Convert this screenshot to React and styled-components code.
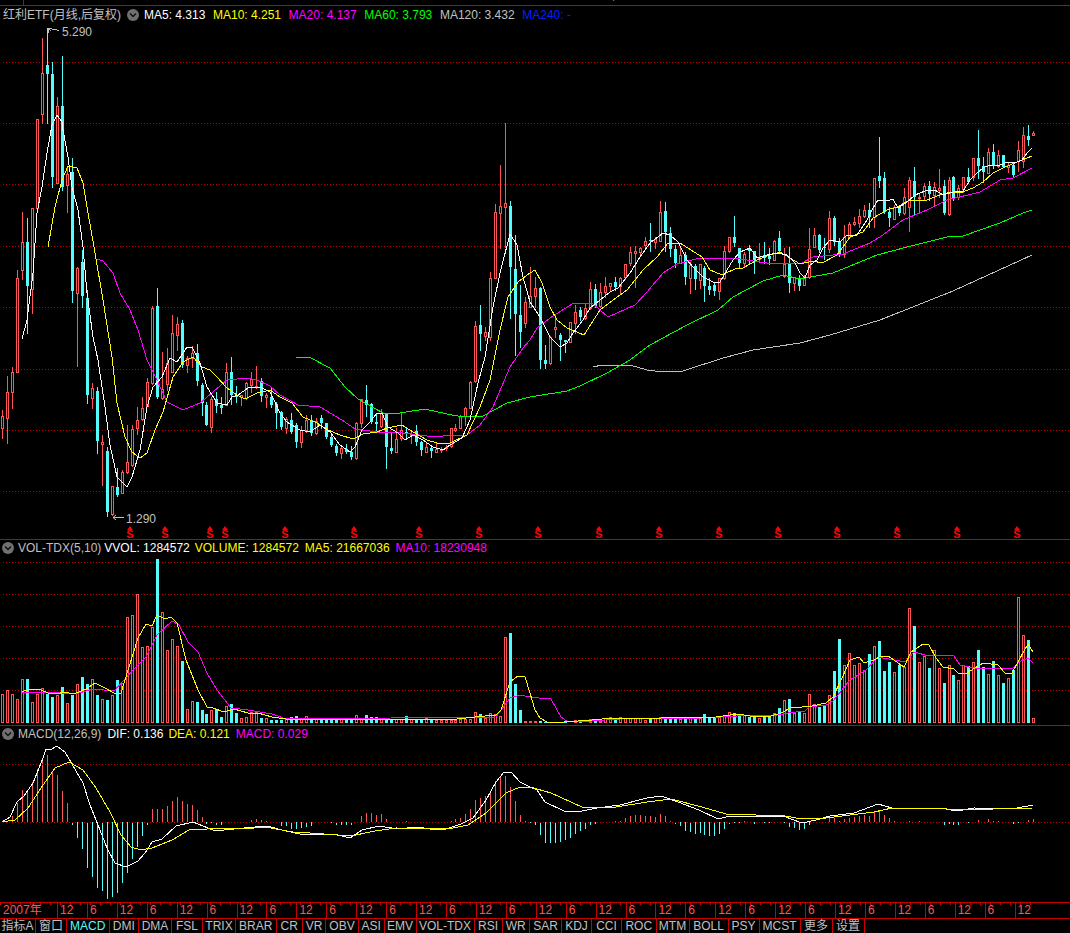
import React from 'react';
import styled, { createGlobalStyle } from 'styled-components';

const RED = '#ff5454';
const CYAN = '#54fcfc';
const LINE = '#c80000';

// page pixels per bar, one bar is one month
const barX = (i) => Math.round(2.3 + 4.98 * i);

// [colour, high, body top, body bottom, low], all in page pixels
const CANDLES = [
  ['r',410,416,428,438],['r',376,392,418,443],['r',367,372,392,408],['r',270,278,372,372],['r',212,242,270,279],['c',218,242,286,333],['r',208,208,289,313],['r',119,119,208,208],
  ['r',38,73,114,123],['c',28,65,74,123],['c',62,74,177,187],['r',97,106,183,183],['c',56,106,187,190],['r',167,174,185,212],['c',158,172,291,302],['r',267,268,293,366],
  ['c',250,262,296,307],['c',290,298,395,403],['r',383,388,398,408],['c',387,391,441,453],['r',435,442,444,485],['c',447,451,512,516],['r',486,486,514,515],['c',468,487,495,496],
  ['r',470,472,493,493],['r',425,462,472,473],['r',425,429,465,466],['r',407,420,428,434],['r',397,408,419,420],['r',378,382,406,406],['r',306,308,383,384],['c',288,306,397,398],
  ['r',352,389,398,399],['r',348,363,384,390],['r',315,333,372,372],['r',317,324,335,350],['c',320,323,365,367],['r',356,358,365,372],['r',346,353,358,367],['c',344,353,381,385],
  ['c',383,385,403,415],['c',402,405,425,425],['r',397,399,427,432],['c',392,399,406,412],['c',397,405,408,413],['r',363,372,405,405],['c',357,372,395,404],['c',386,395,397,402],
  ['r',395,395,397,405],['r',382,383,398,399],['r',372,379,385,392],['r',366,386,387,388],['c',378,381,396,401],['r',393,395,397,407],['c',388,397,405,407],['c',402,404,413,428],
  ['c',411,412,427,429],['r',417,419,428,433],['c',413,420,432,433],['c',423,425,442,447],['r',426,430,442,447],['r',415,420,430,432],['c',415,420,433,435],['r',418,421,433,434],
  ['c',415,418,423,428],['c',423,423,437,438],['c',435,437,445,446],['c',444,446,453,455],['r',447,448,453,458],['c',444,449,452,453],['c',446,452,457,459],['r',422,423,458,459],
  ['r',399,399,423,427],['c',385,400,405,416],['c',403,404,422,423],['c',413,422,424,432],['r',409,413,426,427],['c',413,413,447,468],['c',432,448,451,453],['r',428,439,452,452],
  ['r',413,430,438,440],['c',427,432,434,438],['r',432,434,435,443],['c',425,431,442,445],['c',441,442,450,455],['r',442,447,452,452],['c',445,448,451,457],['r',442,449,452,452],
  ['r',447,449,450,452],['r',445,447,448,450],['r',428,428,446,447],['r',424,428,430,431],['r',415,416,428,428],['r',407,408,416,425],['r',381,382,408,408],['r',321,326,381,382],
  ['c',305,325,334,350],['r',327,332,336,340],['r',272,278,337,340],['r',204,212,278,278],['r',165,206,213,248],['r',123,203,207,247],['c',201,206,267,318],['c',235,269,314,355],
  ['c',285,315,332,347],['r',297,302,323,327],['r',267,296,307,307],['r',277,288,296,307],['c',287,288,360,368],['c',345,360,364,368],['r',336,337,363,364],['r',314,327,329,337],
  ['c',333,335,340,360],['c',340,340,342,352],['r',322,322,342,342],['r',305,312,323,333],['c',307,310,317,320],['r',303,308,318,319],['r',282,289,308,309],['c',284,289,306,307],
  ['r',283,292,306,307],['r',277,286,292,297],['r',283,283,286,290],['c',277,282,287,290],['r',277,278,286,293],['r',264,264,277,279],['r',247,252,263,265],['r',246,251,253,287],
  ['r',247,248,252,254],['r',237,241,245,248],['c',223,240,241,251],['r',237,239,242,248],['r',201,212,241,241],['c',202,211,232,251],['c',227,233,249,256],['c',245,249,263,267],
  ['r',247,255,263,263],['c',252,255,277,284],['r',262,265,278,293],['c',264,266,279,289],['r',264,264,280,288],['c',266,268,286,301],['c',278,286,290,294],['c',283,285,291,295],
  ['r',278,278,291,299],['r',246,251,278,279],['r',237,237,251,252],['c',216,237,243,246],['c',248,248,263,268],['r',252,254,263,266],['c',245,248,251,263],['c',251,251,260,273],
  ['r',243,257,259,262],['c',242,255,258,263],['c',248,256,259,264],['r',240,241,260,260],['c',231,238,251,252],['r',248,264,276,277],['c',247,264,283,292],['r',277,277,283,290],
  ['c',275,279,286,290],['r',275,277,285,285],['r',228,249,277,278],['r',228,235,247,247],['c',234,235,250,252],['c',238,247,248,259],['r',211,218,249,252],['c',216,218,242,245],
  ['c',238,242,255,256],['r',225,237,254,257],['r',222,224,237,238],['r',217,222,224,225],['r',209,216,223,227],['r',205,210,216,217],['c',203,210,217,227],['r',178,178,217,227],
  ['c',137,176,181,187],['c',172,178,212,213],['c',207,212,218,226],['r',205,207,219,219],['c',205,207,213,215],['r',188,197,213,214],['r',177,180,207,231],['c',167,181,197,214],
  ['r',194,197,198,213],['r',183,186,196,200],['c',181,186,194,200],['r',182,187,195,206],['r',169,188,190,197],['c',180,186,213,214],['r',177,180,214,215],['c',176,177,198,200],
  ['r',185,188,197,199],['r',177,177,189,192],['c',168,177,182,183],['r',158,158,177,180],['c',130,158,166,178],['c',157,166,172,182],['r',148,152,173,173],['c',144,152,166,168],
  ['r',150,155,166,167],['c',155,155,167,167],['r',162,165,167,172],['c',162,165,175,176],['r',141,150,161,171],['r',127,135,161,167],['c',125,136,140,145],['r',131,133,135,135],
];

// tops of the volume bars, baseline is y=723, colour comes from the candle
const VOLUMES = [
  694,690,694,699,679,679,702,694,688,694,697,695,687,703,695,684,677,684,679,695,699,700,695,680,683,617,615,594,647,646,627,559,
  612,650,639,646,661,709,701,702,710,714,710,709,717,706,704,713,718,717,712,712,718,718,720,720,720,719,717,716,718,716,718,719,
  718,719,719,719,719,720,719,715,719,715,717,717,719,718,719,719,719,716,719,720,719,718,720,720,720,720,720,720,719,719,719,712,
  714,718,713,714,716,637,633,684,710,721,721,721,721,722,722,722,722,721,722,720,722,722,719,719,721,718,717,719,717,718,718,718,
  718,720,719,718,717,717,717,717,719,718,717,717,718,714,717,717,717,716,712,713,715,715,717,716,718,717,715,713,708,700,699,713,
  712,713,694,704,707,705,695,671,639,665,653,665,663,670,654,646,641,671,662,672,665,667,608,626,662,656,668,650,668,683,665,675,
  680,665,666,662,650,667,674,661,675,683,678,670,597,635,640,718,
];

// MACD bars as signed pixel height from the zero line at y=822
const MACD_BARS = {
  2:6,3:19,4:32,5:32,6:40,7:53,8:63,9:67,10:51,11:47,12:31,13:19,14:-3,15:-16,16:-27,17:-46,18:-55,19:-66,20:-69,21:-77,22:-75,23:-71,24:-61,25:-51,26:-37,27:-25,28:-14,29:-3,
  30:13,31:13,32:13,33:16,34:21,35:25,36:21,37:18,38:17,39:12,40:5,41:-2,42:-1,43:-3,44:-3,50:2,51:3,52:2,53:1,55:-1,56:-4,57:-4,58:-7,59:-7,60:-6,61:-5,62:-4,
  66:-1,67:-3,68:-3,69:-3,70:-3,72:6,73:9,74:9,75:7,76:8,77:3,81:1,88:-1,90:1,91:3,92:4,93:8,94:13,95:22,96:24,97:26,98:31,99:41,100:45,101:46,102:35,103:21,104:7,105:1,
  106:-1,107:-3,108:-13,109:-21,110:-21,111:-21,112:-20,113:-18,114:-16,115:-12,116:-9,117:-7,118:-3,119:-2,123:1,124:1,125:4,126:6,127:7,128:7,129:6,130:6,131:5,132:8,133:6,134:1,
  135:-2,136:-4,137:-9,138:-10,139:-12,140:-11,141:-13,142:-14,143:-14,144:-12,145:-7,146:-2,147:-1,148:-1,149:1,151:-2,152:-1,153:-1,154:-1,157:-1,158:-5,159:-6,160:-8,161:-7,162:-3,
  166:5,167:4,168:1,169:3,170:4,171:5,172:6,173:7,174:6,175:10,176:11,177:7,178:4,179:1,182:1,184:1,188:-1,189:-3,190:-2,191:-3,192:-3,193:-1,194:-1,196:2,198:3,199:1,200:1,202:-1,203:-2,204:-1,206:2,207:3,
};

const MA5 = '22,339 27,320 33,273 37,213 42,187 47,153 52,125 57,115 62,122 63,130 68,157 72,187 78,210 83,247 87,293 93,337 98,360 105,407 110,445 117,477 127,487 132,477 140,450 147,407 153,387 162,377 170,358 177,362 187,347 192,347 200,363 207,387 217,403 227,405 232,397 238,395 248,388 260,387 270,392 275,402 280,413 287,422 295,427 300,430 310,432 320,425 330,432 340,445 350,452 355,447 362,430 370,422 377,413 382,413 388,427 398,433 405,440 413,435 423,440 433,447 443,450 450,445 462,438 470,420 478,383 485,357 493,307 500,273 510,234 517,245 523,277 530,302 540,317 550,337 560,347 567,343 573,333 583,320 590,308 600,300 610,292 618,288 630,273 640,257 650,243 663,233 670,235 678,242 687,260 693,267 703,277 713,282 720,282 727,270 733,260 740,252 750,248 757,258 767,255 778,253 787,255 795,263 800,273 805,278 810,265 817,260 823,248 830,240 840,242 847,235 857,235 867,220 873,208 878,200 887,201 893,199 898,208 907,202 915,195 925,191 935,190 943,195 953,192 963,191 970,180 977,173 983,168 990,165 1000,165 1008,162 1015,163 1022,160 1027,153 1032,148';
const MA10 = '48,247 55,207 62,180 68,166 77,168 83,183 88,213 94,247 103,300 112,357 117,403 125,437 132,452 140,458 147,453 155,430 163,412 173,377 183,362 193,357 202,367 210,370 217,377 227,388 237,395 245,399 257,393 270,390 280,397 292,403 303,417 317,423 328,430 340,435 353,439 363,434 377,432 387,428 402,425 413,432 427,440 437,443 450,443 467,435 480,407 490,380 500,330 508,297 518,282 530,273 535,270 542,283 550,307 557,320 567,328 584,335 600,310 613,300 627,290 643,270 657,257 668,243 680,243 702,257 710,270 722,275 737,268 743,268 757,260 770,255 780,252 790,258 800,264 813,261 822,263 837,255 843,247 850,237 863,232 873,218 887,210 897,207 910,200 927,200 940,195 950,192 960,193 973,188 983,182 993,173 1003,168 1017,162 1032,156';
const MA20 = '97,259 103,261 113,273 120,293 130,310 138,330 147,360 157,380 167,402 183,410 200,403 213,392 227,380 247,378 257,380 270,386 280,395 298,405 320,407 342,420 355,429 377,432 403,433 427,436 443,436 450,435 467,435 480,425 493,407 510,367 523,348 530,340 537,328 550,318 572,304 592,303 608,317 635,305 647,292 663,273 677,264 700,258 733,258 767,263 800,264 813,257 843,254 870,243 883,235 903,220 927,210 947,200 980,192 1000,180 1013,178 1032,168';
const MA60 = '296,357 309,357 330,368 345,387 358,399 383,413 400,413 425,409 447,414 463,417 483,416 507,403 530,397 567,391 580,386 607,373 630,360 650,345 687,325 718,310 733,297 763,281 783,275 800,279 833,273 877,255 907,247 947,237 963,236 1000,223 1023,213 1032,210';
const MA120 = '593,367 602,365 630,365 647,370 663,372 683,371 723,358 753,350 800,343 830,335 880,320 953,291 1032,255';

const VOL_MA5 = '22,692 29,689 41,690 48,693 57,694 64,692 74,694 86,689 95,683 105,688 114,693 121,693 129,667 138,638 146,624 152,626 157,615 165,619 171,617 177,623 186,660 198,690 207,707 213,708 224,712 234,709 248,713 258,713 272,717 286,719 344,719 448,720 475,717 496,715 501,710 510,682 518,676 525,677 530,693 535,710 540,718 547,722 564,722 592,720 613,718 661,718 716,717 737,714 757,717 771,716 781,713 792,707 802,707 812,706 826,703 833,697 842,678 850,660 859,657 864,663 874,660 881,656 888,656 904,667 911,652 923,644 929,645 936,658 943,667 954,669 959,674 967,673 983,663 998,665 1005,673 1012,673 1019,660 1028,644 1033,652';
const VOL_MA10 = '22,692 45,692 62,693 79,693 93,689 114,691 124,680 136,667 146,657 157,635 172,621 179,625 188,642 198,652 207,673 217,690 231,708 248,710 272,714 286,719 496,717 510,698 520,695 530,697 539,698 551,699 561,717 568,722 592,721 633,718 699,718 737,716 778,715 788,713 805,711 809,707 826,705 833,701 850,680 866,670 878,657 905,662 914,652 929,656 940,655 954,656 960,665 974,668 1012,669 1019,662 1028,658 1033,663';

const DIF = '2,822 10,817 17,802 24,796 33,783 43,758 46,749 52,749 57,746 65,752 72,764 83,783 90,805 98,825 107,848 115,863 126,867 138,861 145,853 152,842 162,839 176,826 193,822 203,826 213,830 224,830 234,829 255,827 267,826 282,830 300,834 317,834 334,834 350,838 362,830 379,826 398,829 417,827 430,829 446,829 461,824 473,818 486,800 496,782 504,772 511,772 520,782 530,787 537,790 545,802 564,811 571,811 582,811 597,808 620,805 647,798 661,796 678,802 699,810 718,819 730,816 764,816 783,816 802,823 816,820 830,816 854,813 878,804 892,808 940,808 957,811 974,808 1012,809 1033,805';
const DEA = '2,822 15,820 28,808 41,788 55,768 69,762 83,770 96,788 110,812 121,835 131,847 141,850 152,848 172,840 189,830 207,829 255,828 265,827 293,832 310,833 351,836 375,831 396,828 448,829 468,825 486,813 506,793 520,787 530,787 551,793 582,807 616,807 647,802 671,799 702,807 726,814 785,816 802,819 826,818 874,812 892,808 940,808 954,810 1033,808';

const PRICE_GRID = [62, 123, 184, 246, 307, 369, 430, 491];
const VOL_GRID = [562, 594, 626, 658, 690];
const MACD_GRID = [764, 822];
const SIGNALS = [130, 165, 210, 225, 285, 354, 419, 479, 538, 599, 659, 719, 778, 837, 897, 957, 1017];

const AXIS_LABELS = ['12','6','12','6','12','6','12','6','12','6','12','6','12','6','12','6','12','6','12','6','12','6','12','6','12','6','12','6','12','6','12','6','12'];

const TABS = [
  ['指标A', 36], ['窗口', 31], ['MACD', 42.5], ['DMI', 29.5], ['DMA', 33], ['FSL', 31], ['TRIX', 33], ['BRAR', 40.5], ['CR', 26.5], ['VR', 23],
  ['OBV', 33], ['ASI', 25.5], ['EMV', 32], ['VOL-TDX', 58], ['RSI', 28], ['WR', 27.5], ['SAR', 32], ['KDJ', 30], ['CCI', 30], ['ROC', 34.5],
  ['MTM', 33], ['BOLL', 39], ['PSY', 31], ['MCST', 41], ['更多', 32], ['设置', 32],
];

const QUOTES = ['4.313', '0.062', '1.45%', '4.251', '4.37', '4.22', '128.4', '5.29', '1.29', '+0.08', '3.79', '1.3亿'];

const GlobalStyle = createGlobalStyle`
  html, body {
    margin: 0;
    background: #000;
    overflow: hidden;
  }
`;

const Page = styled.div`
  display: flex;
  flex-direction: column;
  width: 1070px;
  height: 933px;
  overflow: hidden;
  background: #000;
  color: #c0c0c0;
  font-family: "Liberation Sans", "Noto Sans CJK SC", sans-serif;
  font-size: 12px;
`;

// the quote row above is cut off by the window, only the feet of its digits show
const TopStrip = styled.div`
  display: flex;
  flex: 0 0 5px;
  overflow: hidden;
  border-bottom: 1px solid ${LINE};
`;

const TopCell = styled.div`
  flex: 0 0 23px;
  border-right: 1px solid ${LINE};
`;

const QuoteRow = styled.div`
  display: flex;
  gap: 19px;
  margin: -11px 0 0 60px;
  line-height: 14px;
`;

const Quote = styled.span`
  color: ${(p) => (p.$up ? CYAN : '#c0c0c0')};
`;

const Panel = styled.section`
  display: flex;
  flex-direction: column;
  flex: 0 0 ${(p) => p.$height}px;
  border-bottom: 1px solid ${LINE};
  overflow: hidden;
`;

const Legend = styled.div`
  display: flex;
  align-items: center;
  gap: ${(p) => p.$gap || 6}px;
  flex: 0 0 ${(p) => p.$height}px;
  padding-left: ${(p) => p.$inset}px;
  line-height: 14px;
  white-space: nowrap;
`;

const LegendItem = styled.span`
  color: ${(p) => p.$color || '#c0c0c0'};
  margin-right: ${(p) => p.$pull || 0}px;
`;

const LegendMenu = styled.svg`
  flex: 0 0 12px;
  width: 12px;
  height: 12px;
  margin: ${(p) => p.$margin || '0 -2px 0 0'};
`;

const ChartSvg = styled.svg`
  display: block;
  flex: 1 1 auto;
  width: 1070px;
  font-family: "Liberation Sans", sans-serif;
`;

const ExtremeLabel = styled.text`
  fill: #c0c0c0;
  font-size: 12px;
`;

const SignalLetter = styled.text`
  fill: #ff0000;
  font-size: 11px;
  font-weight: 700;
  text-anchor: middle;
`;

const TimeAxis = styled.div`
  display: grid;
  grid-template-columns: 57px repeat(33, 29.93px);
  flex: 0 0 15px;
  border-bottom: 1px solid ${LINE};
  color: ${RED};
  line-height: 15px;
  overflow: hidden;
  background: repeating-linear-gradient(to right, ${LINE} 0 1px, transparent 1px 10px) left top / 1036px 2px no-repeat;
`;

const AxisCell = styled.div`
  padding-left: ${(p) => (p.$first ? 3 : 2)}px;
  white-space: nowrap;
  & + & {
    border-left: 1px solid ${LINE};
  }
`;

const TabBar = styled.div`
  display: flex;
  flex: 0 0 14px;
  line-height: 14px;
  overflow: hidden;
`;

const Tab = styled.div`
  flex: 0 0 ${(p) => p.$width}px;
  box-sizing: border-box;
  border-right: 1px solid ${LINE};
  color: ${(p) => (p.$active ? CYAN : '#c0c0c0')};
  text-align: center;
  white-space: nowrap;
`;

const MenuIcon = ({ margin }) => (
  <LegendMenu viewBox="0 0 12 12" $margin={margin}>
    <circle cx="6" cy="6" r="6" fill="#707070" />
    <path d="M3 4.5 6 7.5 9 4.5" fill="none" stroke="#101010" strokeWidth="1.4" />
  </LegendMenu>
);

const Trace = ({ points, color }) => (
  <polyline points={points} fill="none" stroke={color} strokeWidth="1" shapeRendering="crispEdges" />
);

const GridLines = ({ rows }) =>
  rows.map((y) => (
    <line key={y} x1="3" x2="1070" y1={y + 0.5} y2={y + 0.5} stroke="#c00000" strokeDasharray="1 2" shapeRendering="crispEdges" />
  ));

const Candle = ({ i, data }) => {
  const [kind, high, top, bottom, low] = data;
  const x = barX(i);
  const color = kind === 'r' ? RED : CYAN;
  return (
    <g shapeRendering="crispEdges">
      <line x1={x + 0.5} x2={x + 0.5} y1={high} y2={low + 1} stroke={color} />
      {kind === 'r' ? (
        <rect x={x - 0.5} y={top + 0.5} width="2" height={Math.max(bottom - top, 1)} fill="#000" stroke={color} />
      ) : (
        <rect x={x - 1} y={top} width="3" height={Math.max(bottom - top, 1)} fill={color} />
      )}
    </g>
  );
};

const VolumeBar = ({ i, top }) => {
  const x = barX(i);
  const kind = CANDLES[i][0];
  const height = 723 - top;
  return kind === 'r' ? (
    <rect x={x - 0.5} y={top + 0.5} width="2" height={height - 1} fill="#000" stroke={RED} shapeRendering="crispEdges" />
  ) : (
    <rect x={x - 1} y={top} width="3" height={height} fill={CYAN} shapeRendering="crispEdges" />
  );
};

const PriceChart = () => (
  <ChartSvg viewBox="0 24 1070 515" height="515">
    <GridLines rows={PRICE_GRID} />
    {CANDLES.map((c, i) => <Candle key={i} i={i} data={c} />)}
    <Trace points={MA120} color="#c0c0c0" />
    <Trace points={MA60} color="#00ff00" />
    <Trace points={MA20} color="#ff00ff" />
    <Trace points={MA10} color="#ffff00" />
    <Trace points={MA5} color="#ffffff" />

    <path d="M48 28h4M48 28v5M48 28l3 3M52 30l3-1 4 2" fill="none" stroke="#c0c0c0" shapeRendering="crispEdges" />
    <ExtremeLabel x="62" y="36">5.290</ExtremeLabel>
    <path d="M113 517.5h11M116 515l-3 2.5 3 2.5" fill="none" stroke="#c0c0c0" />
    <ExtremeLabel x="126" y="523">1.290</ExtremeLabel>

    {SIGNALS.map((x) => (
      <g key={x}>
        <polygon points={`${x},526 ${x - 3},530 ${x + 3},530`} fill="#ff0000" />
        <SignalLetter x={x} y="538">S</SignalLetter>
      </g>
    ))}
  </ChartSvg>
);

const VolumeChart = () => (
  <ChartSvg viewBox="0 555 1070 170" height="170">
    <GridLines rows={VOL_GRID} />
    {VOLUMES.map((top, i) => <VolumeBar key={i} i={i} top={top} />)}
    <Trace points={VOL_MA10} color="#ff00ff" />
    <Trace points={VOL_MA5} color="#ffff00" />
  </ChartSvg>
);

const MacdChart = () => (
  <ChartSvg viewBox="0 741 1070 161" height="161">
    {Object.entries(MACD_BARS).map(([i, h]) => {
      const x = barX(Number(i));
      return (
        <line
          key={i}
          x1={x + 0.5}
          x2={x + 0.5}
          y1={822}
          y2={822 - h}
          stroke={h > 0 ? RED : CYAN}
          shapeRendering="crispEdges"
        />
      );
    })}
    <GridLines rows={MACD_GRID} />
    <Trace points={DIF} color="#ffffff" />
    <Trace points={DEA} color="#ffff00" />
  </ChartSvg>
);

const App = () => (
  <Page>
    <GlobalStyle />
    <TopStrip>
      <TopCell />
      <QuoteRow>
        {QUOTES.map((q, i) => <Quote key={i} $up={i === 6}>{q}</Quote>)}
      </QuoteRow>
    </TopStrip>

    <Panel $height={533}>
      <Legend $height={18} $inset={3} $gap={7.6}>
        <LegendItem>红利ETF(月线,后复权)</LegendItem>
        <MenuIcon margin="0 -2.6px 0 -1.6px" />
        <LegendItem $color="#ffffff">MA5: 4.313</LegendItem>
        <LegendItem $color="#ffff00">MA10: 4.251</LegendItem>
        <LegendItem $color="#ff00ff">MA20: 4.137</LegendItem>
        <LegendItem $color="#00ff00">MA60: 3.793</LegendItem>
        <LegendItem>MA120: 3.432</LegendItem>
        <LegendItem $color="#0020ff">MA240: -</LegendItem>
      </Legend>
      <PriceChart />
    </Panel>

    <Panel $height={185}>
      <Legend $height={15} $inset={2}>
        <MenuIcon />
        <LegendItem $pull={-3}>VOL-TDX(5,10)</LegendItem>
        <LegendItem $color="#ffffff" $pull={-1}>VVOL: 1284572</LegendItem>
        <LegendItem $color="#ffff00">VOLUME: 1284572</LegendItem>
        <LegendItem $color="#ffff00">MA5: 21667036</LegendItem>
        <LegendItem $color="#ff00ff">MA10: 18230948</LegendItem>
      </Legend>
      <VolumeChart />
    </Panel>

    <Panel $height={176}>
      <Legend $height={15} $inset={2}>
        <MenuIcon />
        <LegendItem>MACD(12,26,9)</LegendItem>
        <LegendItem $color="#ffffff" $pull={-1}>DIF: 0.136</LegendItem>
        <LegendItem $color="#ffff00">DEA: 0.121</LegendItem>
        <LegendItem $color="#ff00ff">MACD: 0.029</LegendItem>
      </Legend>
      <MacdChart />
    </Panel>

    <TimeAxis>
      <AxisCell $first>2007年</AxisCell>
      {AXIS_LABELS.map((label, i) => <AxisCell key={i}>{label}</AxisCell>)}
    </TimeAxis>

    <TabBar>
      {TABS.map(([label, width]) => (
        <Tab key={label} $width={width} $active={label === 'MACD'}>{label}</Tab>
      ))}
    </TabBar>
  </Page>
);

export default App;
